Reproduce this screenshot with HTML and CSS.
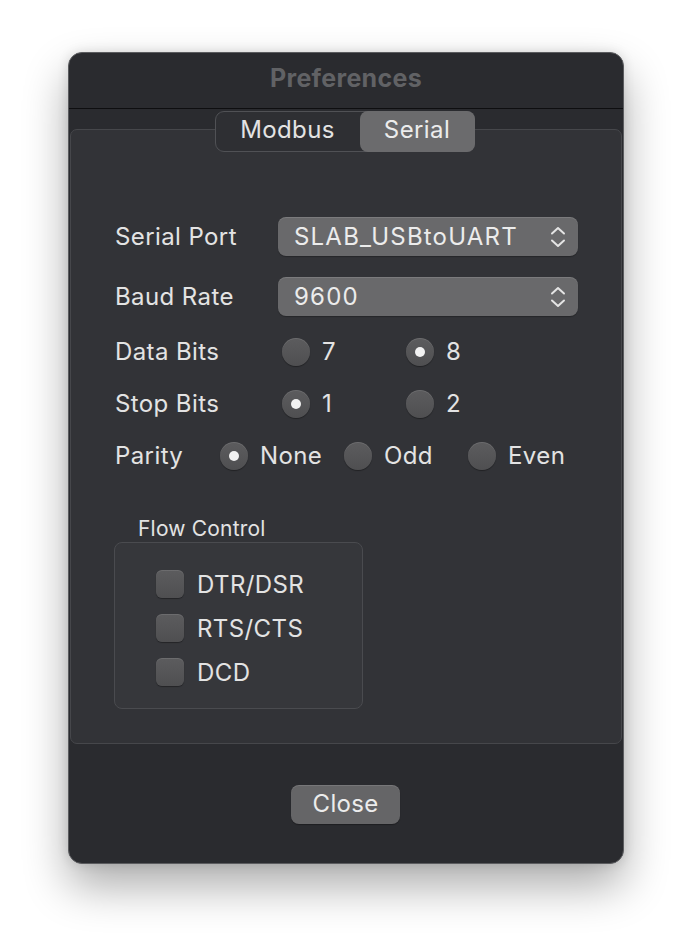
FILE: index.html
```html
<!DOCTYPE html>
<html>
<head>
<meta charset="utf-8">
<link rel="stylesheet" href="styles.css">
</head>
<body>
<div class="stage">
  <div class="window">
    <div class="titlebar"><span class="title">Preferences</span></div>
    <div class="tabbox">
      <div class="seg">
        <span class="seg-item">Modbus</span>
        <span class="seg-item sel">Serial</span>
      </div>
      <div class="form">
        <div class="row popup-row">
          <span class="label">Serial Port</span>
          <div class="popup">
            <span class="popup-text">SLAB_USBtoUART</span>
            <svg class="chev" width="16" height="24" viewBox="0 0 16 24"><path d="M2 8.5 L8 3 L14 8.5 M2 15.5 L8 21 L14 15.5" fill="none" stroke="#e4e4e4" stroke-width="2" stroke-linecap="round" stroke-linejoin="round"/></svg>
          </div>
        </div>
        <div class="row popup-row r2">
          <span class="label">Baud Rate</span>
          <div class="popup">
            <span class="popup-text">9600</span>
            <svg class="chev" width="16" height="24" viewBox="0 0 16 24"><path d="M2 8.5 L8 3 L14 8.5 M2 15.5 L8 21 L14 15.5" fill="none" stroke="#e4e4e4" stroke-width="2" stroke-linecap="round" stroke-linejoin="round"/></svg>
          </div>
        </div>
        <div class="row radio-row r3">
          <span class="label wide">Data Bits</span>
          <span class="opt"><span class="radio"></span>7</span>
          <span class="opt"><span class="radio on"></span>8</span>
        </div>
        <div class="row radio-row r4">
          <span class="label wide">Stop Bits</span>
          <span class="opt"><span class="radio on"></span>1</span>
          <span class="opt"><span class="radio"></span>2</span>
        </div>
        <div class="row radio-row r4">
          <span class="label narrow">Parity</span>
          <span class="opt"><span class="radio on"></span>None</span>
          <span class="opt"><span class="radio"></span>Odd</span>
          <span class="opt"><span class="radio"></span>Even</span>
        </div>
        <div class="group-label">Flow Control</div>
        <div class="group">
          <div class="check-row"><span class="check"></span>DTR/DSR</div>
          <div class="check-row"><span class="check"></span>RTS/CTS</div>
          <div class="check-row"><span class="check"></span>DCD</div>
        </div>
      </div>
    </div>
    <div class="footer"><span class="btn">Close</span></div>
  </div>
</div>
</body>
</html>
```
FILE: styles.css
```css
html, body {
  margin: 0;
  padding: 0;
  background: #ffffff;
}
body {
  font-family: Inter, "Noto Sans", sans-serif;
  color: #e3e3e3;
}
.stage {
  padding: 52px 0 0 68px;
  height: 948px;
  box-sizing: border-box;
}
.window {
  width: 556px;
  height: 812px;
  box-sizing: border-box;
  background: #2a2b2f;
  border: 1px solid #5b5c5f;
  border-radius: 14px;
  box-shadow: 0 22px 45px rgba(0,0,0,0.33), 0 0 12px rgba(0,0,0,0.12);
  display: flex;
  flex-direction: column;
}
.titlebar {
  height: 55px;
  border-bottom: 1px solid #0e0e10;
  display: flex;
  align-items: center;
  justify-content: center;
}
.title {
  font-size: 25px;
  font-weight: 700;
  color: #616265;
  letter-spacing: 0.3px;
  margin-top: -5px;
}
.tabbox {
  margin: 20px 1px 0 1px;
  height: 615px;
  box-sizing: border-box;
  background: #323337;
  border: 1px solid #46474b;
  border-radius: 7px;
  display: flex;
  flex-direction: column;
}
.seg {
  align-self: center;
  margin-top: -19px;
  margin-left: -3px;
  width: 260px;
  height: 41px;
  box-sizing: border-box;
  border: 1px solid #505155;
  border-radius: 9px;
  background: #2e2f33;
  display: flex;
  font-size: 24px;
  letter-spacing: 0.4px;
}
.seg-item {
  display: flex;
  align-items: center;
  justify-content: center;
  width: 144px;
  padding-bottom: 4px;
}
.seg-item.sel {
  width: 115px;
  background: #6b6b6d;
  border-radius: 8px;
  margin: -1px -1px -1px 0;
  color: #ececec;
}
.form {
  margin-top: 65px;
  padding-left: 44px;
  font-size: 24px;
  letter-spacing: 0.4px;
}
.row {
  display: flex;
  align-items: center;
}
.popup-row { height: 39px; }
.r2 { margin-top: 21px; }
.r3 { margin-top: 22px; }
.r4 { margin-top: 24px; }
.radio-row { height: 28px; }
.radio-row > .label, .opt { padding-bottom: 1px; }
.label { width: 163px; flex: none; }
.label.wide { width: 167px; }
.label.narrow { width: 105px; }
.popup {
  width: 300px;
  height: 39px;
  box-sizing: border-box;
  background: #69696b;
  border-radius: 8px;
  box-shadow: inset 0 1px 0 rgba(255,255,255,0.12), 0 1px 1px rgba(0,0,0,0.25);
  display: flex;
  align-items: center;
  padding: 0 12px 0 16px;
  color: #ececec;
}
.popup-text { flex: 1; letter-spacing: 1.2px; }
.chev { flex: none; }
.opt {
  width: 124px;
  display: flex;
  align-items: center;
  gap: 12px;
}
.radio {
  width: 28px;
  height: 28px;
  border-radius: 50%;
  box-sizing: border-box;
  background: linear-gradient(#5c5c5e, #4f4f51);
  box-shadow: inset 0 1px 0 rgba(255,255,255,0.1), 0 1px 1px rgba(0,0,0,0.35);
  flex: none;
  display: flex;
  align-items: center;
  justify-content: center;
}
.radio.on::after {
  content: "";
  width: 10px;
  height: 10px;
  border-radius: 50%;
  background: #f2f2f2;
}
.group-label {
  margin-top: 46px;
  margin-left: 23px;
  font-size: 21px;
  line-height: 25px;
  letter-spacing: 0.2px;
}
.group {
  margin-top: 1px;
  margin-left: -1px;
  width: 249px;
  height: 167px;
  box-sizing: border-box;
  background: #36373b;
  border: 1px solid #4a4b4f;
  border-radius: 8px;
  padding: 27px 0 0 41px;
  display: flex;
  flex-direction: column;
  gap: 16px;
}
.check-row {
  display: flex;
  align-items: center;
  gap: 13px;
  height: 28px;
}
.check {
  width: 28px;
  height: 28px;
  box-sizing: border-box;
  border-radius: 6px;
  background: linear-gradient(#5c5c5e, #4f4f51);
  box-shadow: inset 0 1px 0 rgba(255,255,255,0.1), 0 1px 1px rgba(0,0,0,0.35);
  flex: none;
}
.footer {
  display: flex;
  justify-content: center;
  padding-top: 41px;
}
.btn {
  width: 109px;
  height: 39px;
  box-sizing: border-box;
  background: #656567;
  border-radius: 8px;
  box-shadow: inset 0 1px 0 rgba(255,255,255,0.12), 0 1px 1px rgba(0,0,0,0.3);
  display: flex;
  align-items: center;
  justify-content: center;
  font-size: 24px;
  letter-spacing: 0.3px;
  color: #ececec;
  margin-left: -1px;
  padding-bottom: 3px;
}
```
